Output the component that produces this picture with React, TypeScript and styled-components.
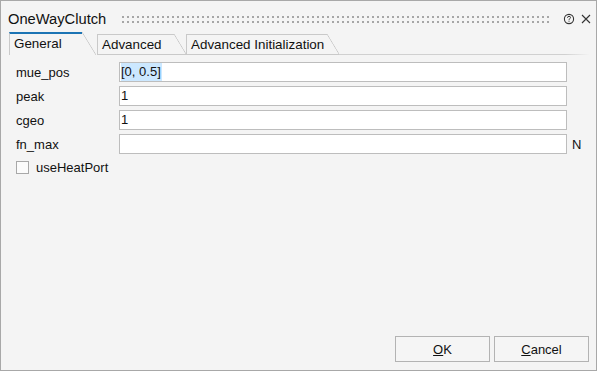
import React from "react";
import styled, { createGlobalStyle } from "styled-components";

const Global = createGlobalStyle`
  html, body { margin: 0; padding: 0; background: #f4f4f4; }
  body { font-family: "Liberation Sans", Arial, sans-serif; }
  * { box-sizing: border-box; }
`;

const Window = styled.div`
  width: 597px;
  height: 371px;
  border: 1px solid #a8a8a8;
  background: #f4f4f4;
  display: flex;
  flex-direction: column;
  color: #000;
  font-family: "Liberation Sans", Arial, sans-serif;
`;

const TitleBar = styled.div`
  height: 31px;
  display: flex;
  align-items: center;
  padding: 5px 0 0 7px;
`;

const Title = styled.div`
  font-size: 14.7px;
  line-height: 18px;
  color: #111;
`;

const Grip = styled.svg`
  flex: 1;
  height: 8px;
  margin: 0 12px 0 16px;
`;

const IconButton = styled.div`
  width: 14px;
  height: 14px;
  display: flex;
  align-items: center;
  justify-content: center;
  margin-right: 3px;
`;

const TabRow = styled.div`
  display: flex;
  align-items: flex-end;
  height: 23px;
  padding-left: 8px;
`;

const Tab = styled.div<{ $active?: boolean; $w: number }>`
  display: flex;
  width: ${(p) => p.$w}px;
  height: ${(p) => (p.$active ? 23 : 21)}px;
  border-bottom: ${(p) => (p.$active ? "none" : "1px solid #c9c9c9")};
  margin-right: ${(p) => (p.$active ? 1 : 0)}px;
`;

const TabFace = styled.div<{ $active?: boolean }>`
  flex: 1;
  border-left: 1px solid #c9c9c9;
  border-top: ${(p) => (p.$active ? "2px solid #1c74b4" : "1px solid #c9c9c9")};
  padding-left: 4px;
  font-size: 13.4px;
  line-height: ${(p) => (p.$active ? 20 : 19)}px;
  color: #111;
  white-space: nowrap;
`;

const TabSlant = styled.div<{ $w: number }>`
  width: ${(p) => p.$w}px;
  flex: none;
  background: linear-gradient(
    to top right,
    transparent calc(50% - 0.7px),
    #c9c9c9 50%,
    transparent calc(50% + 0.7px)
  );
`;

const TabFill = styled.div`
  flex: 1;
  height: 1px;
  background: linear-gradient(to right, #d0d0d0 90%, #f4f4f4);
  margin-right: 6px;
`;

const Body = styled.div`
  flex: 1;
  display: flex;
  flex-direction: column;
  padding: 7px 7px 8px 15px;
`;

const Form = styled.div`
  display: grid;
  grid-template-columns: 98px 448px auto;
  grid-auto-rows: 20px;
  row-gap: 4px;
  column-gap: 5px;
  align-items: center;
`;

const Label = styled.div`
  font-size: 13px;
  color: #111;
`;

const Field = styled.div`
  height: 20px;
  border: 1px solid #bdbdbd;
  background: #fff;
  padding-left: 1px;
  font-size: 13px;
  line-height: 18px;
  color: #111;
`;

const Selected = styled.span`
  background: #cce8ff;
  display: inline-block;
  height: 18px;
  padding-right: 1px;
`;

const Unit = styled.div`
  font-size: 13px;
  color: #111;
`;

const CheckRow = styled.div`
  display: flex;
  align-items: center;
  gap: 7px;
  margin-top: 7px;
  height: 13px;
`;

const CheckBox = styled.div`
  width: 13px;
  height: 13px;
  border: 1px solid #a8a8a8;
  background: #fbfbfb;
`;

const Spacer = styled.div`
  flex: 1;
`;

const ButtonRow = styled.div`
  display: flex;
  justify-content: flex-end;
  gap: 4px;
`;

const Button = styled.div`
  width: 95px;
  height: 26px;
  border: 1px solid #b3b3b3;
  background: #f5f5f5;
  font-size: 13px;
  color: #111;
  display: flex;
  align-items: center;
  justify-content: center;
`;

const fields: { label: string; value: string; selected?: boolean; unit?: string }[] = [
  { label: "mue_pos", value: "[0, 0.5]", selected: true },
  { label: "peak", value: "1" },
  { label: "cgeo", value: "1" },
  { label: "fn_max", value: "", unit: "N" },
];

export default function App() {
  return (
    <>
      <Global />
      <Window>
        <TitleBar>
          <Title>OneWayClutch</Title>
          <Grip preserveAspectRatio="none">
            <defs>
              <pattern id="dots" width="5" height="5" patternUnits="userSpaceOnUse">
                <rect x="0" y="1" width="2" height="2" fill="#a6a6a6" />
              </pattern>
            </defs>
            <rect x="0" y="0" width="100%" height="8" fill="url(#dots)" />
          </Grip>
          <IconButton>
            <svg width="12" height="12" viewBox="0 0 12 12">
              <circle cx="6" cy="6" r="4.6" fill="none" stroke="#333" strokeWidth="1.1" />
              <path d="M4.5 4.8 Q4.6 3.3 6 3.3 Q7.5 3.3 7.5 4.6 Q7.5 5.4 6.6 5.8 Q6 6.1 6 6.9" fill="none" stroke="#333" strokeWidth="1" />
              <rect x="5.5" y="7.7" width="1" height="1" fill="#333" />
            </svg>
          </IconButton>
          <IconButton>
            <svg width="12" height="12" viewBox="0 0 12 12">
              <path d="M2 2 L10 10 M10 2 L2 10" stroke="#333" strokeWidth="1.1" />
            </svg>
          </IconButton>
        </TitleBar>
        <TabRow>
          <Tab $active $w={87}>
            <TabFace $active>General</TabFace>
            <TabSlant $w={14} />
          </Tab>
          <Tab $w={89}>
            <TabFace>Advanced</TabFace>
            <TabSlant $w={12} />
          </Tab>
          <Tab $w={153}>
            <TabFace>Advanced Initialization</TabFace>
            <TabSlant $w={12} />
          </Tab>
          <TabFill />
        </TabRow>
        <Body>
          <Form>
            {fields.map((f) => (
              <React.Fragment key={f.label}>
                <Label>{f.label}</Label>
                <Field>{f.selected ? <Selected>{f.value}</Selected> : f.value}</Field>
                <Unit>{f.unit ?? ""}</Unit>
              </React.Fragment>
            ))}
          </Form>
          <CheckRow>
            <CheckBox />
            <Label>useHeatPort</Label>
          </CheckRow>
          <Spacer />
          <ButtonRow>
            <Button>
              <span>
                <u>O</u>K
              </span>
            </Button>
            <Button>
              <span>
                <u>C</u>ancel
              </span>
            </Button>
          </ButtonRow>
        </Body>
      </Window>
    </>
  );
}
